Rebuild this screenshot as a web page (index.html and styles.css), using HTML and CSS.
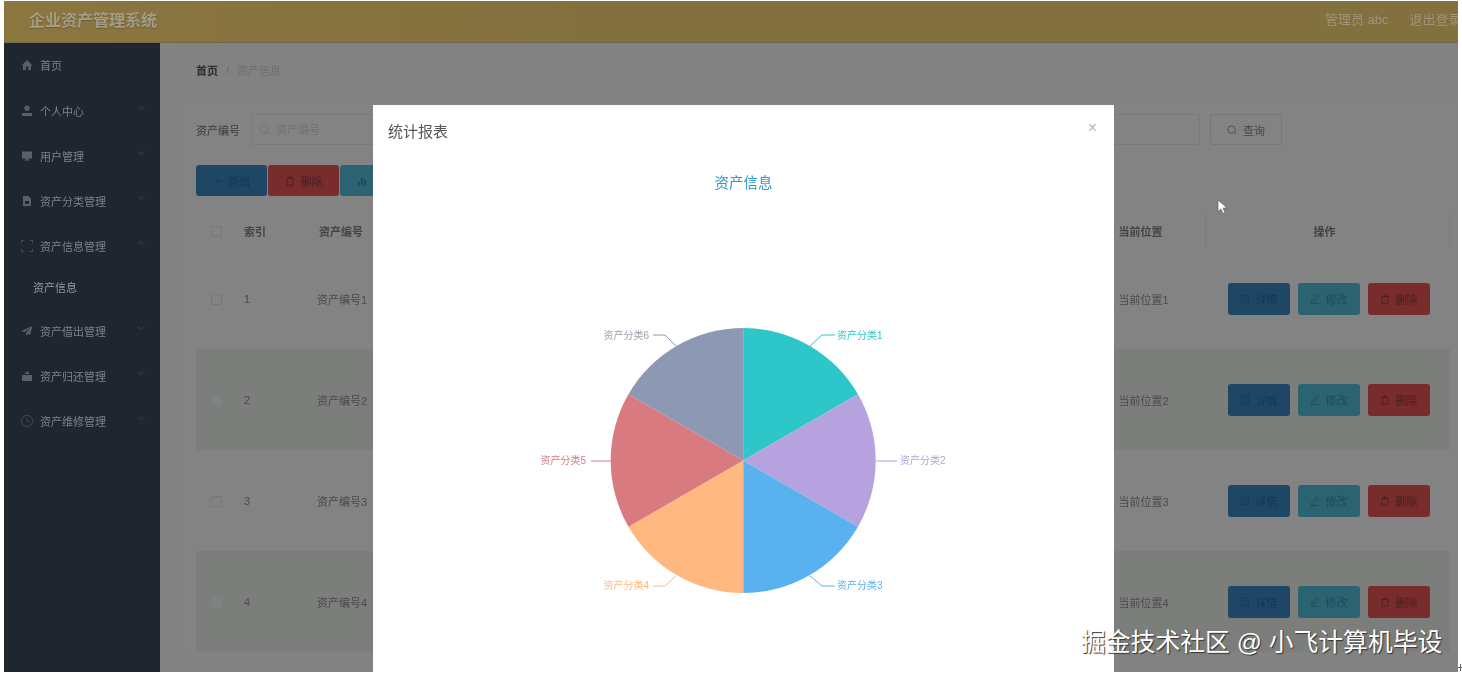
FILE: index.html

```html
<!DOCTYPE html>
<html lang="zh-CN">
<head>
    <meta charset="UTF-8">
    <title>企业资产管理系统</title>
    <link rel="stylesheet" href="styles.css">
</head>
<body>
    <svg class="icon-defs" width="0" height="0">
        <symbol id="i-home" viewBox="0 0 12 12"><path d="M6 1 0.5 6.500H2V11H4.800V7.600H7.200V11H10V6.500H11.500Z"/></symbol>
        <symbol id="i-user" viewBox="0 0 12 12"><circle cx="6" cy="3.200" r="2.600"/><path d="M1 8h10v3H1z"/></symbol>
        <symbol id="i-screen" viewBox="0 0 12 12"><path d="M1 1.500h10v7H7v1h1.500v1h-5v-1H5v-1H1z"/></symbol>
        <symbol id="i-doc" viewBox="0 0 12 12"><path d="M2 1h5.500L10 3.500V11H2zM4 6v3h4V6z"/></symbol>
        <symbol id="i-frame" viewBox="0 0 12 12"><path d="M.5 3V.5H3M9 .5h2.500V3M11.500 9v2.500H9M3 11.500H.5V9" fill="none" stroke="currentColor" stroke-width=".7"/></symbol>
        <symbol id="i-plane" viewBox="0 0 12 12"><path d="M11.500 1 .5 6l3 1.300L9 3 5 8v3l1.800-2.200L9 10z"/></symbol>
        <symbol id="i-wallet" viewBox="0 0 12 12"><path d="M1 5h10v6H1zM3 4l4-3 1.500 3z"/></symbol>
        <symbol id="i-clock" viewBox="0 0 12 12"><circle cx="6" cy="6" r="5.500" fill="none" stroke="currentColor" stroke-width=".6"/><path d="M6 3v3.200h2.600" fill="none" stroke="currentColor" stroke-width=".6"/></symbol>
        <symbol id="i-down" viewBox="0 0 8 8"><path d="M1 2.500 4 5.500 7 2.500" fill="none" stroke="currentColor" stroke-width=".7"/></symbol>
        <symbol id="i-up" viewBox="0 0 8 8"><path d="M1 5.500 4 2.500 7 5.500" fill="none" stroke="currentColor" stroke-width=".7"/></symbol>
        <symbol id="i-search" viewBox="0 0 12 12"><circle cx="5.500" cy="5.500" r="4.400" fill="none" stroke="currentColor"/><path d="M9 9l2 2" stroke="currentColor"/></symbol>
        <symbol id="i-trash" viewBox="0 0 12 12"><path d="M2.500 3h7v8h-7zM1.500 3h9M4.500 3V1h3v2" fill="none" stroke="currentColor"/></symbol>
        <symbol id="i-plus" viewBox="0 0 12 12"><path d="M6 1.500v9M1.500 6h9" stroke="currentColor"/></symbol>
        <symbol id="i-bars" viewBox="0 0 12 12"><path d="M1 7h2.500v4H1zM4.800 2h2.500v9H4.800zM8.500 5H11v6H8.500z"/></symbol>
        <symbol id="i-detail" viewBox="0 0 12 12"><path d="M2 1.500h8v9H2zM4 4.500h4M4 7.500h4" fill="none" stroke="currentColor"/></symbol>
        <symbol id="i-edit" viewBox="0 0 12 12"><path d="M8.500 1 10.500 3 4 9.500 1.500 10.500 2 8zM1.500 11.500h9" fill="none" stroke="currentColor"/></symbol>
    </svg>

    <div class="app">
        <header class="topbar">
            <div class="brand">企业资产管理系统</div>
            <div class="user-info">
                <span>管理员 abc</span>
                <span>退出登录</span>
            </div>
        </header>

        <div class="layout">
            <nav class="sidebar">
                <a class="nav-item"><svg class="nav-icon"><use href="#i-home"/></svg>首页</a>
                <a class="nav-item"><svg class="nav-icon"><use href="#i-user"/></svg>个人中心<svg class="nav-arrow"><use href="#i-down"/></svg></a>
                <a class="nav-item"><svg class="nav-icon"><use href="#i-screen"/></svg>用户管理<svg class="nav-arrow"><use href="#i-down"/></svg></a>
                <a class="nav-item"><svg class="nav-icon"><use href="#i-doc"/></svg>资产分类管理<svg class="nav-arrow"><use href="#i-down"/></svg></a>
                <a class="nav-item"><svg class="nav-icon"><use href="#i-frame"/></svg>资产信息管理<svg class="nav-arrow"><use href="#i-up"/></svg></a>
                <a class="nav-sub">资产信息</a>
                <a class="nav-item"><svg class="nav-icon"><use href="#i-plane"/></svg>资产借出管理<svg class="nav-arrow"><use href="#i-down"/></svg></a>
                <a class="nav-item"><svg class="nav-icon"><use href="#i-wallet"/></svg>资产归还管理<svg class="nav-arrow"><use href="#i-down"/></svg></a>
                <a class="nav-item"><svg class="nav-icon"><use href="#i-clock"/></svg>资产维修管理<svg class="nav-arrow"><use href="#i-down"/></svg></a>
            </nav>

            <main class="main">
                <div class="breadcrumb"><b>首页</b><span class="crumb-sep">/</span><span class="crumb-now">资产信息</span></div>

                <section class="card">
                    <form class="search-row">
                        <label class="search-label">资产编号</label>
                        <div class="search-box">
                            <svg class="search-icon"><use href="#i-search"/></svg>
                            <input class="search-input" type="text" placeholder="资产编号">
                        </div>
                        <button type="button" class="btn-search"><svg class="btn-icon"><use href="#i-search"/></svg>查询</button>
                    </form>

                    <div class="toolbar">
                        <button type="button" class="btn btn-blue btn-wide"><svg class="btn-icon"><use href="#i-plus"/></svg>新增</button>
                        <button type="button" class="btn btn-red btn-wide"><svg class="btn-icon"><use href="#i-trash"/></svg>删除</button>
                        <button type="button" class="btn btn-teal btn-wide"><svg class="btn-icon"><use href="#i-bars"/></svg>统计</button>
                    </div>

                    <table class="data-table">
                        <colgroup>
                            <col class="col-check"><col class="col-index"><col class="col-no"><col><col class="col-pos"><col class="col-action">
                        </colgroup>
                        <thead>
                            <tr>
                                <th class="cell-check"><span class="checkbox"></span></th>
                                <th>索引</th>
                                <th>资产编号</th>
                                <th></th>
                                <th class="cell-split">当前位置</th>
                                <th class="cell-split cell-end">操作</th>
                            </tr>
                        </thead>
                        <tbody>
                            <tr>
                                <td class="cell-check"><span class="checkbox"></span></td>
                                <td>1</td><td class="cell-no">资产编号1</td><td></td><td>当前位置1</td>
                                <td class="cell-actions">
                                    <button type="button" class="btn btn-blue"><svg class="btn-icon"><use href="#i-detail"/></svg>详情</button>
                                    <button type="button" class="btn btn-teal"><svg class="btn-icon"><use href="#i-edit"/></svg>修改</button>
                                    <button type="button" class="btn btn-red"><svg class="btn-icon"><use href="#i-trash"/></svg>删除</button>
                                </td>
                            </tr>
                            <tr class="stripe">
                                <td class="cell-check"><span class="checkbox"></span></td>
                                <td>2</td><td class="cell-no">资产编号2</td><td></td><td>当前位置2</td>
                                <td class="cell-actions">
                                    <button type="button" class="btn btn-blue"><svg class="btn-icon"><use href="#i-detail"/></svg>详情</button>
                                    <button type="button" class="btn btn-teal"><svg class="btn-icon"><use href="#i-edit"/></svg>修改</button>
                                    <button type="button" class="btn btn-red"><svg class="btn-icon"><use href="#i-trash"/></svg>删除</button>
                                </td>
                            </tr>
                            <tr>
                                <td class="cell-check"><span class="checkbox"></span></td>
                                <td>3</td><td class="cell-no">资产编号3</td><td></td><td>当前位置3</td>
                                <td class="cell-actions">
                                    <button type="button" class="btn btn-blue"><svg class="btn-icon"><use href="#i-detail"/></svg>详情</button>
                                    <button type="button" class="btn btn-teal"><svg class="btn-icon"><use href="#i-edit"/></svg>修改</button>
                                    <button type="button" class="btn btn-red"><svg class="btn-icon"><use href="#i-trash"/></svg>删除</button>
                                </td>
                            </tr>
                            <tr class="stripe">
                                <td class="cell-check"><span class="checkbox"></span></td>
                                <td>4</td><td class="cell-no">资产编号4</td><td></td><td>当前位置4</td>
                                <td class="cell-actions">
                                    <button type="button" class="btn btn-blue"><svg class="btn-icon"><use href="#i-detail"/></svg>详情</button>
                                    <button type="button" class="btn btn-teal"><svg class="btn-icon"><use href="#i-edit"/></svg>修改</button>
                                    <button type="button" class="btn btn-red"><svg class="btn-icon"><use href="#i-trash"/></svg>删除</button>
                                </td>
                            </tr>
                        </tbody>
                    </table>
                </section>
            </main>
        </div>

        <!-- statistics dialog -->
        <div class="modal-layer">
            <div class="modal">
                <div class="modal-head">
                    <span class="modal-title">统计报表</span>
                    <span class="modal-close">×</span>
                </div>
                <h3 class="chart-title">资产信息</h3>
                <svg class="pie" width="741" height="472" viewBox="0 0 741 472">
                    <path d="M370.200 260.500V128A132.500 132.500 0 0 1 484.950 194.250Z" fill="#2ec7c9"/>
                    <path d="M370.200 260.500 484.950 194.250A132.500 132.500 0 0 1 484.950 326.750Z" fill="#b6a2de"/>
                    <path d="M370.200 260.500 484.950 326.750A132.500 132.500 0 0 1 370.200 393Z" fill="#5ab1ef"/>
                    <path d="M370.200 260.500V393A132.500 132.500 0 0 1 255.450 326.750Z" fill="#ffb980"/>
                    <path d="M370.200 260.500 255.450 326.750A132.500 132.500 0 0 1 255.450 194.250Z" fill="#d87a80"/>
                    <path d="M370.200 260.500 255.450 194.250A132.500 132.500 0 0 1 370.200 128Z" fill="#8d98b3"/>

                    <g fill="none" stroke-width="1">
                        <path d="M437 146 449 135H462" stroke="#2ec7c9"/>
                        <path d="M503 261H524" stroke="#b6a2de"/>
                        <path d="M437 376 449 386H462" stroke="#5ab1ef"/>
                        <path d="M303 376 292 386H280" stroke="#ffb980"/>
                        <path d="M238 261H218" stroke="#d87a80"/>
                        <path d="M303 146 292 135H280" stroke="#8d98b3"/>
                    </g>

                    <text class="pie-label" x="464" y="139" fill="#2ec7c9">资产分类1</text>
                    <text class="pie-label" x="527" y="264" fill="#b6a2de">资产分类2</text>
                    <text class="pie-label" x="464" y="389" fill="#5ab1ef">资产分类3</text>
                    <text class="pie-label" x="276" y="389" fill="#ffb980" text-anchor="end">资产分类4</text>
                    <text class="pie-label" x="213" y="264" fill="#d87a80" text-anchor="end">资产分类5</text>
                    <text class="pie-label" x="276" y="139" fill="#9aa0ac" text-anchor="end">资产分类6</text>
                </svg>
            </div>
        </div>

        <svg class="cursor" width="11" height="16" viewBox="0 0 11 16"><path d="M1 1v11.500l3-2.500 2 4.500 2-1-2-4.500h4z" fill="#fff" stroke="#555" stroke-width=".6"/></svg>
    </div>

    <div class="watermark">掘金技术社区 @ 小飞计算机毕设</div>
    <svg class="corner-mark" width="4" height="7" viewBox="0 0 4 7"><path d="M2.500 0v7M0 3.500h4" stroke="#666"/></svg>
</body>
</html>
```

FILE: styles.css

```css
* {
    box-sizing: border-box;
}
html, body {
    height: 100%;
}
body {
    margin: 0;
    background-color: #fff;
    font-family: "Liberation Sans", "Noto Sans CJK SC", sans-serif;
    font-size: 11px;
    overflow: hidden;
    position: relative;
}
.icon-defs {
    position: absolute;
}
.app {
    position: relative;
    height: 671px;
    margin: 1px 4px 0;
    overflow: hidden;
    background-color: #828282;
    filter: blur(0.5px);
}

/* top bar */
.topbar {
    height: 42px;
    display: flex;
    align-items: center;
    justify-content: space-between;
    padding: 0 0 6px 25px;
    background: linear-gradient(90deg, #8c7640, #82703e 40%, #82703e);
    border-bottom: 1px solid #6f6a48;
}
.brand {
    font-size: 16px;
    font-weight: bold;
    color: #a39d88;
    text-shadow: 0 1px 1px #6c5c33;
}
.user-info {
    display: flex;
    gap: 21px;
    width: 133px;
    font-size: 13px;
    white-space: nowrap;
    color: #a0957a;
}

.layout {
    display: flex;
    height: 629px;
}

/* sidebar */
.sidebar {
    width: 156px;
    flex-shrink: 0;
    background-color: #1f2630;
    color: #7d8187;
}
.nav-item {
    height: 45px;
    display: flex;
    align-items: center;
    padding-left: 17px;
}
.nav-item:first-child {
    padding-bottom: 2px;
}
.nav-icon {
    width: 12px;
    height: 12px;
    margin-right: 7px;
    fill: #5a6068;
    color: #5a6068;
}
.nav-arrow {
    width: 8px;
    height: 8px;
    margin-left: auto;
    margin-right: 15px;
    margin-top: -6px;
    color: #454c56;
}
.nav-sub {
    height: 40px;
    display: flex;
    align-items: center;
    padding: 0 0 3px 29px;
    color: #93979c;
}

/* main content */
.main {
    flex: 1;
    min-width: 0;
    background-color: #828282;
}
.breadcrumb {
    height: 55px;
    display: flex;
    align-items: center;
    padding: 0 0 2px 36px;
    color: #333;
}
.breadcrumb b {
    color: #2f2f2f;
}
.crumb-sep {
    margin: 0 8px;
    color: #6b6b6b;
}
.crumb-now {
    color: #6e6e6e;
}
.card {
    margin-left: 20px;
    padding: 16px 8px 0 16px;
    background-color: #838383;
}

.search-row {
    display: flex;
    align-items: center;
    height: 31px;
    margin-bottom: 20px;
}
.search-label {
    width: 55px;
    color: #3b3b3b;
}
.search-box {
    position: relative;
    width: 949px;
    margin-right: 10px;
}
.search-icon {
    position: absolute;
    left: 8px;
    top: 10px;
    width: 11px;
    height: 11px;
    color: #727272;
}
.search-input {
    display: block;
    width: 100%;
    height: 31px;
    padding: 0 8px 0 24px;
    font: inherit;
    background: transparent;
    border: 1px solid #7a7a7a;
    border-radius: 2px;
}
.search-input::placeholder {
    color: #727272;
}
.btn-search {
    width: 72px;
    height: 31px;
    font: inherit;
    color: #474747;
    background: transparent;
    border: 1px solid #777;
    border-radius: 2px;
    display: flex;
    align-items: center;
    justify-content: center;
}

.toolbar {
    display: flex;
    gap: 1px;
    margin-bottom: 18px;
}
.btn {
    width: 62px;
    height: 32px;
    padding: 0;
    font: inherit;
    border: none;
    border-radius: 3px;
    display: inline-flex;
    align-items: center;
    justify-content: center;
    vertical-align: middle;
}
.btn-wide {
    width: 71px;
    height: 31px;
}
.btn-blue {
    background-color: #1e4766;
    color: #193650;
}
.btn-teal {
    background-color: #2c6372;
    color: #1f4a56;
}
.btn-red {
    background-color: #792c2c;
    color: #472022;
}
.btn-icon {
    width: 10px;
    height: 10px;
    margin-right: 6px;
    fill: currentColor;
    color: inherit;
}

/* table */
.data-table {
    width: 1254px;
    table-layout: fixed;
    border-collapse: collapse;
}
.col-check {
    width: 40px;
}
.col-index {
    width: 75px;
}
.col-no {
    width: 100px;
}
.col-pos {
    width: 95px;
}
.col-action {
    width: 244px;
}
.data-table th {
    height: 34px;
    padding: 0 8px;
    text-align: left;
    color: #444;
    font-weight: bold;
}
.data-table td {
    height: 101px;
    padding: 0 8px;
    color: #4a4a4a;
    white-space: nowrap;
}
.data-table .cell-check {
    padding: 0;
    text-align: center;
}
.data-table .cell-no {
    padding-left: 6px;
}
.data-table .cell-split {
    border-right: 1px solid #7b7b7b;
}
.data-table .cell-end {
    text-align: center;
    border-left: 1px solid #7b7b7b;
    padding-right: 14px;
}
.data-table .cell-actions {
    padding: 0 0 0 22px;
    font-size: 0;
}
.cell-actions .btn {
    font-size: 11px;
    margin-right: 8px;
}
.stripe {
    background-color: #7c7e7c;
}
.checkbox {
    display: inline-block;
    width: 11px;
    height: 11px;
    vertical-align: middle;
    border: 1px solid #777;
    border-radius: 2px;
}
.stripe .checkbox {
    background-color: #808381;
    border-color: #7e817f;
}

/* dialog */
.modal-layer {
    position: absolute;
    inset: 0;
    padding: 104px 0 0 369px;
}
.modal {
    width: 741px;
    height: 580px;
    background-color: #fff;
}
.modal-head {
    height: 60px;
    position: relative;
    padding: 18px 15px 0;
}
.modal-title {
    font-size: 15px;
    line-height: 18px;
    color: #555;
}
.modal-close {
    position: absolute;
    right: 17px;
    top: 13px;
    font-size: 16px;
    line-height: 20px;
    color: #b5b5b5;
}
.chart-title {
    margin: 0;
    height: 35px;
    padding-top: 9px;
    text-align: center;
    font-size: 14.500px;
    line-height: 18px;
    font-weight: normal;
    color: #2c9cc9;
}
.pie {
    display: block;
}
.pie-label {
    font-size: 10px;
}

.cursor {
    position: absolute;
    left: 1213px;
    top: 198px;
}
.watermark {
    position: absolute;
    left: 1081px;
    top: 626px;
    font-size: 24.800px;
    line-height: 34px;
    white-space: nowrap;
    color: #fff;
    text-shadow: 1px 1px 1px #333;
}
.corner-mark {
    position: absolute;
    left: 1458px;
    top: 664px;
}
```
